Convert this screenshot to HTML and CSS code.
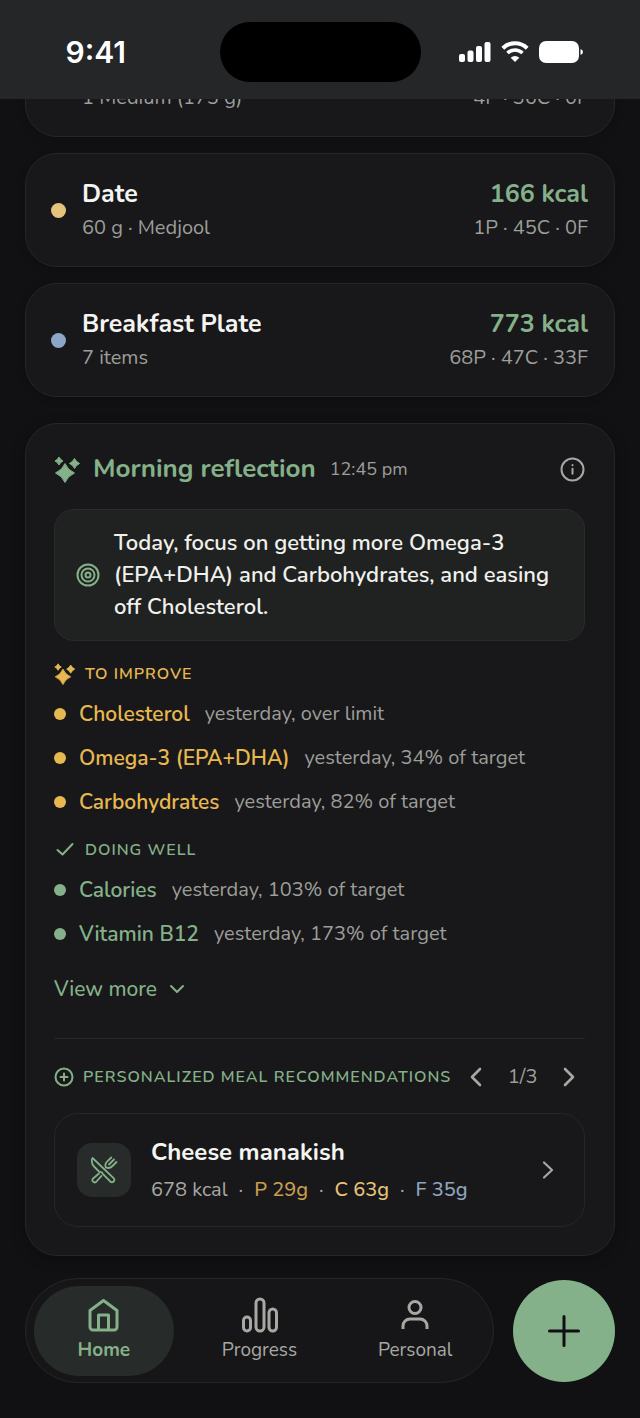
FILE: index.html
```html
<!DOCTYPE html>
<html lang="en">
<head>
    <meta charset="UTF-8">
    <meta name="viewport" content="width=device-width, initial-scale=1.0">
    <title>Home</title>
    <link rel="stylesheet" href="styles.css">
</head>
<body>
    <!-- Shared icons -->
    <svg class="icon-defs" aria-hidden="true">
        <symbol id="sparkles" viewBox="0 0 27 27">
            <g fill="currentColor" stroke="currentColor" stroke-width="1" stroke-linejoin="round">
                <path d="M11 7.500Q13.800 14.200 20.500 17Q13.800 19.800 11 26.500Q8.200 19.800 1.500 17Q8.200 14.200 11 7.500Z"/>
                <path d="M20.500 2.500Q22.100 5.900 25.500 7.500Q22.100 9.100 20.500 12.500Q18.900 9.100 15.500 7.500Q18.900 5.900 20.500 2.500Z"/>
                <path d="M5 1Q6.200 3.800 9 5Q6.200 6.200 5 9Q3.800 6.200 1 5Q3.800 3.800 5 1Z"/>
            </g>
        </symbol>
    </svg>

    <div class="app">
        <header class="status-bar">
            <span class="time">9:41</span>
            <div class="island"></div>
            <div class="signals">
                <svg width="32" height="22" viewBox="0 0 32 22" fill="currentColor" aria-hidden="true">
                    <rect x="0" y="13" width="6" height="8" rx="2"/>
                    <rect x="8.500" y="9.500" width="6" height="11.500" rx="2"/>
                    <rect x="17" y="5" width="6" height="16" rx="2"/>
                    <rect x="25.500" y="1" width="6" height="20" rx="2"/>
                </svg>
                <svg width="28" height="22" viewBox="0 0 28 22" fill="none" stroke="currentColor" aria-hidden="true">
                    <path d="M1.800 7.200a17.500 17.500 0 0 1 24.400 0" stroke-width="4"/>
                    <path d="M6.500 12a10.800 10.800 0 0 1 15 0" stroke-width="3.600"/>
                    <path d="M14 21l-4.300-4.300a6.200 6.200 0 0 1 8.600 0z" fill="currentColor" stroke="none"/>
                </svg>
                <svg width="45" height="22" viewBox="0 0 45 22" fill="currentColor" aria-hidden="true">
                    <rect x="0" y="0" width="40" height="22" rx="7"/>
                    <path d="M41.500 8q2.500.8 2.500 3t-2.500 3z"/>
                </svg>
            </div>
        </header>

        <main class="content">
            <article class="food-card">
                <div class="food-info">
                    <p class="food-detail">1 Medium (173 g)</p>
                </div>
                <div class="food-values">
                    <p class="food-detail">4P · 36C · 0F</p>
                </div>
            </article>

            <article class="food-card">
                <span class="dot dot-carb"></span>
                <div class="food-info">
                    <h2 class="food-name">Date</h2>
                    <p class="food-detail">60 g · Medjool</p>
                </div>
                <div class="food-values">
                    <p class="food-kcal">166 kcal</p>
                    <p class="food-detail">1P · 45C · 0F</p>
                </div>
            </article>

            <article class="food-card">
                <span class="dot dot-plate"></span>
                <div class="food-info">
                    <h2 class="food-name">Breakfast Plate</h2>
                    <p class="food-detail">7 items</p>
                </div>
                <div class="food-values">
                    <p class="food-kcal">773 kcal</p>
                    <p class="food-detail">68P · 47C · 33F</p>
                </div>
            </article>

            <section class="reflection">
                <div class="reflection-header">
                    <svg class="green" width="27" height="27" aria-hidden="true"><use href="#sparkles"/></svg>
                    <h2 class="reflection-title">Morning reflection</h2>
                    <time class="reflection-time">12:45 pm</time>
                    <button class="icon-button info-button" aria-label="About this reflection">
                        <svg width="25" height="25" viewBox="0 0 25 25" fill="none" stroke="currentColor" stroke-width="2" stroke-linecap="round" aria-hidden="true">
                            <circle cx="12.500" cy="12.500" r="11"/>
                            <path d="M12.500 11.800v5M12.500 8v.2"/>
                        </svg>
                    </button>
                </div>

                <div class="focus-box">
                    <svg class="green" width="24" height="24" viewBox="0 0 24 24" fill="none" stroke="currentColor" stroke-width="2" aria-hidden="true">
                        <circle cx="12" cy="12" r="10.500"/>
                        <circle cx="12" cy="12" r="6.500"/>
                        <circle cx="12" cy="12" r="2.500"/>
                    </svg>
                    <p>Today, focus on getting more Omega-3 (EPA+DHA) and Carbohydrates, and easing off Cholesterol.</p>
                </div>

                <h3 class="group-title amber">
                    <svg width="22" height="22" aria-hidden="true"><use href="#sparkles"/></svg>
                    TO IMPROVE
                </h3>
                <ul class="nutrients amber">
                    <li><span class="name">Cholesterol</span><span class="note">yesterday, over limit</span></li>
                    <li><span class="name">Omega-3 (EPA+DHA)</span><span class="note">yesterday, 34% of target</span></li>
                    <li><span class="name">Carbohydrates</span><span class="note">yesterday, 82% of target</span></li>
                </ul>

                <h3 class="group-title group-title-well green">
                    <svg width="22" height="22" viewBox="0 0 22 22" fill="none" stroke="currentColor" stroke-width="2" stroke-linecap="round" stroke-linejoin="round" aria-hidden="true">
                        <path d="M3.500 11l5 4.500L18.500 5"/>
                    </svg>
                    DOING WELL
                </h3>
                <ul class="nutrients green">
                    <li><span class="name">Calories</span><span class="note">yesterday, 103% of target</span></li>
                    <li><span class="name">Vitamin B12</span><span class="note">yesterday, 173% of target</span></li>
                </ul>

                <button class="view-more green">
                    View more
                    <svg width="16" height="16" viewBox="0 0 16 16" fill="none" stroke="currentColor" stroke-width="2" stroke-linecap="round" stroke-linejoin="round" aria-hidden="true">
                        <path d="M2 5l6 6 6-6"/>
                    </svg>
                </button>

                <div class="meals-header">
                    <svg class="green" width="20" height="20" viewBox="0 0 20 20" fill="none" stroke="currentColor" stroke-width="2" stroke-linecap="round" aria-hidden="true">
                        <circle cx="10" cy="10" r="8.500"/>
                        <path d="M10 6.500v7M6.500 10h7"/>
                    </svg>
                    <h3 class="meals-title green">PERSONALIZED MEAL RECOMMENDATIONS</h3>
                    <div class="pager">
                        <button class="icon-button" aria-label="Previous meal">
                            <svg width="14" height="20" viewBox="0 0 14 20" fill="none" stroke="currentColor" stroke-width="2.600" stroke-linecap="round" stroke-linejoin="round" aria-hidden="true">
                                <path d="M11 2l-8 8 8 8"/>
                            </svg>
                        </button>
                        <span class="page">1/3</span>
                        <button class="icon-button" aria-label="Next meal">
                            <svg width="14" height="20" viewBox="0 0 14 20" fill="none" stroke="currentColor" stroke-width="2.600" stroke-linecap="round" stroke-linejoin="round" aria-hidden="true">
                                <path d="M3 2l8 8-8 8"/>
                            </svg>
                        </button>
                    </div>
                </div>

                <a class="meal-card" href="#">
                    <span class="meal-icon">
                        <svg width="28" height="28" viewBox="0 0 28 28" fill="none" stroke="currentColor" stroke-width="1.800" stroke-linecap="round" stroke-linejoin="round" aria-hidden="true">
                            <!-- knife -->
                            <path d="M2.500 2C1.200 5 2 8.500 4.500 11l4.500 4.500c1 .8 2 .5 2.800.8.500.3.500 1 1 1.500l7.500 7.700a2.300 2.300 0 0 0 3.300-3.300Z"/>
                            <!-- fork -->
                            <path d="M15.800 11.500c-1-2.500-.3-4.500 1.700-6.300L21.300 1.500M24 3.500l-5 5M26.500 6l-4 4c-1.800 1.800-3.800 2.500-6 1.600"/>
                            <path d="M9 17.500l-6.200 5.300a2.300 2.300 0 0 0 3.200 3.200l5.500-6.200"/>
                        </svg>
                    </span>
                    <span class="meal-info">
                        <strong class="meal-name">Cheese manakish</strong>
                        <span class="macros">
                            <span>678 kcal</span>
                            <span>·</span>
                            <span class="macro protein">P 29g</span>
                            <span>·</span>
                            <span class="macro carbs">C 63g</span>
                            <span>·</span>
                            <span class="macro fat">F 35g</span>
                        </span>
                    </span>
                    <svg width="12" height="18" viewBox="0 0 12 18" fill="none" stroke="currentColor" stroke-width="2.200" stroke-linecap="round" stroke-linejoin="round" aria-hidden="true">
                        <path d="M2 1.500L10 9l-8 7.500"/>
                    </svg>
                </a>
            </section>
        </main>

        <footer class="bottom-bar">
            <nav class="tabs">
                <a class="tab active" href="#">
                    <svg width="36" height="36" viewBox="0 0 36 36" fill="none" stroke="currentColor" stroke-width="3" stroke-linejoin="round" aria-hidden="true">
                        <path d="M4 13.500L17.500 3.500l13.500 10v16.500a3 3 0 0 1-3 3h-21a3 3 0 0 1-3-3Z"/>
                        <path d="M12.500 33V18h10v15"/>
                    </svg>
                    Home
                </a>
                <a class="tab" href="#">
                    <svg width="36" height="36" viewBox="0 0 36 36" fill="none" stroke="currentColor" stroke-width="3" aria-hidden="true">
                        <rect x="1.500" y="20" width="7" height="14" rx="3.500"/>
                        <rect x="14" y="2" width="8" height="32" rx="4"/>
                        <rect x="27" y="12" width="7.500" height="22" rx="3.700"/>
                    </svg>
                    Progress
                </a>
                <a class="tab" href="#">
                    <svg width="36" height="36" viewBox="0 0 36 36" fill="none" stroke="currentColor" stroke-width="3" aria-hidden="true">
                        <circle cx="18" cy="10.500" r="6"/>
                        <path d="M6 32v-3a7 7 0 0 1 7-7h10a7 7 0 0 1 7 7v3"/>
                    </svg>
                    Personal
                </a>
            </nav>
            <button class="add-button" aria-label="Add food">
                <svg width="34" height="34" viewBox="0 0 34 34" fill="none" stroke="currentColor" stroke-width="3" stroke-linecap="round" aria-hidden="true">
                    <path d="M17 2.500v29M2.500 17h29"/>
                </svg>
            </button>
        </footer>
    </div>
</body>
</html>
```

FILE: styles.css
```css
* {
    box-sizing: border-box;
}
body {
    margin: 0;
    background-color: #111113;
    color: #9c9e99;
    font-family: Nunito, Lato, sans-serif;
    font-size: 20px;
    line-height: 30px;
}
h2, h3, p, ul {
    margin: 0;
    padding: 0;
}
a {
    color: inherit;
    text-decoration: none;
}
button {
    padding: 0;
    border: none;
    background: none;
    color: inherit;
    font: inherit;
    cursor: pointer;
}
svg {
    display: block;
    flex-shrink: 0;
}
.icon-defs {
    position: absolute;
    width: 0;
    height: 0;
}
.green {
    color: #84b189;
}
.amber {
    color: #e8b850;
}
.app {
    display: flex;
    flex-direction: column;
    height: 100vh;
}

/* Status bar */
.status-bar {
    display: grid;
    grid-template-columns: 1fr 201px 1fr;
    align-items: center;
    padding: 22px 0 17px;
    background-color: #252628;
    color: #fff;
}
.time {
    padding-right: 28px;
    text-align: center;
    font-family: Inter, sans-serif;
    font-size: 30px;
    font-weight: 600;
}
.island {
    height: 60px;
    border-radius: 30px;
    background-color: #000;
}
.signals {
    display: flex;
    justify-content: center;
    gap: 10px;
    padding-right: 18px;
}

/* Scrolled list, kept at its end */
.content {
    display: flex;
    flex: 1;
    flex-direction: column;
    justify-content: flex-end;
    gap: 16px;
    min-height: 0;
    padding: 0 25px 22px;
    overflow: hidden;
}
.food-card {
    display: flex;
    flex-shrink: 0;
    align-items: center;
    gap: 16px;
    padding: 23px 26px 23px 25px;
    border: 1px solid #252628;
    border-radius: 32px;
    background-color: #18181a;
    box-shadow: 0 2px 8px rgba(0, 0, 0, 0.2);
}
.food-info {
    flex: 1;
}
.food-info:first-child {
    padding-left: 31px;
}
.food-values {
    text-align: right;
}
.food-name, .food-kcal {
    margin-bottom: 2px;
    font-size: 25px;
    font-weight: 700;
    line-height: 34px;
}
.food-name {
    color: #f4f5f1;
}
.food-kcal {
    color: #84b189;
}
.dot {
    width: 15px;
    height: 15px;
    border-radius: 50%;
}
.dot-carb {
    background-color: #e4c37c;
}
.dot-plate {
    background-color: #8ba6c6;
}

/* Morning reflection */
.reflection {
    flex-shrink: 0;
    margin-top: 10px;
    padding: 27px 29px 28px 28px;
    border: 1px solid #252628;
    border-radius: 32px;
    background-color: #18181a;
    box-shadow: 0 4px 14px rgba(0, 0, 0, 0.3);
}
.reflection-header {
    display: flex;
    align-items: center;
    height: 36px;
    margin-bottom: 22px;
}
.reflection-title {
    margin: 0 14px 0 12px;
    color: #84b189;
    font-size: 26px;
    font-weight: 700;
}
.reflection-time {
    font-size: 18px;
}
.icon-button {
    display: flex;
    align-items: center;
    justify-content: center;
    color: #a7a8a3;
}
.info-button {
    margin-left: auto;
}
.focus-box {
    display: flex;
    align-items: center;
    gap: 14px;
    margin-bottom: 19px;
    padding: 17px 21px;
    border: 1px solid #292c2a;
    border-radius: 20px;
    background-color: #202221;
    color: #f0f1ed;
    font-size: 22px;
    font-weight: 600;
    line-height: 32px;
}
.group-title, .meals-title {
    font-size: 16px;
    font-weight: 600;
    letter-spacing: 1px;
    line-height: 28px;
}
.group-title {
    display: flex;
    align-items: center;
    gap: 9px;
    margin-bottom: 4px;
}
.group-title-well {
    margin-top: 12px;
}
.nutrients {
    list-style: none;
}
.nutrients li {
    display: flex;
    align-items: center;
    height: 44px;
}
.nutrients li::before {
    content: "";
    width: 12px;
    height: 12px;
    margin-right: 13px;
    border-radius: 50%;
    background-color: currentColor;
}
.nutrients .name {
    margin-right: 15px;
    font-size: 21px;
    font-weight: 600;
}
.nutrients .note {
    color: #9c9e99;
}
.view-more {
    display: flex;
    align-items: center;
    gap: 12px;
    margin: 18px 0 34px;
    font-size: 21px;
    font-weight: 500;
    line-height: 30px;
}
.meals-header {
    display: flex;
    align-items: center;
    gap: 9px;
    margin-bottom: 19px;
    padding-top: 21px;
    border-top: 1px solid #252628;
}
.meals-title {
    line-height: 34px;
    white-space: nowrap;
}
.pager {
    display: flex;
    flex: 1;
    align-items: center;
    justify-content: space-between;
    padding: 0 9px;
}
.meal-card {
    display: flex;
    align-items: center;
    gap: 20px;
    padding: 21px 30px 21px 22px;
    border: 1px solid #252628;
    border-radius: 24px;
    color: #a7a8a3;
}
.meal-icon {
    display: flex;
    align-items: center;
    justify-content: center;
    width: 54px;
    height: 54px;
    border-radius: 15px;
    background-color: #272b29;
    color: #84b189;
}
.meal-info {
    display: flex;
    flex: 1;
    flex-direction: column;
    gap: 6px;
}
.meal-name {
    color: #f4f5f1;
    font-size: 24px;
    line-height: 34px;
}
.macros {
    display: flex;
    gap: 11px;
}
.macro {
    font-weight: 500;
}
.protein {
    color: #c99d50;
}
.carbs {
    color: #e6c278;
}
.fat {
    color: #8fa5bd;
}

/* Bottom bar */
.bottom-bar {
    display: flex;
    align-items: center;
    gap: 19px;
    padding: 0 25px 35px;
}
.tabs {
    display: flex;
    flex: 1;
    gap: 16px;
    padding: 7px 8px 6px;
    border: 1px solid #252628;
    border-radius: 53px;
    background-color: #161618;
}
.tab {
    display: flex;
    flex: 1;
    flex-direction: column;
    align-items: center;
    gap: 2px;
    padding: 11px 0;
    border-radius: 45px;
    color: #a7a8a3;
    font-size: 19px;
}
.tab.active {
    background-color: #272b29;
    color: #84b189;
    font-weight: 700;
}
.add-button {
    display: flex;
    align-items: center;
    justify-content: center;
    width: 102px;
    height: 102px;
    border-radius: 50%;
    background-color: #84b189;
    color: #111113;
}
```
